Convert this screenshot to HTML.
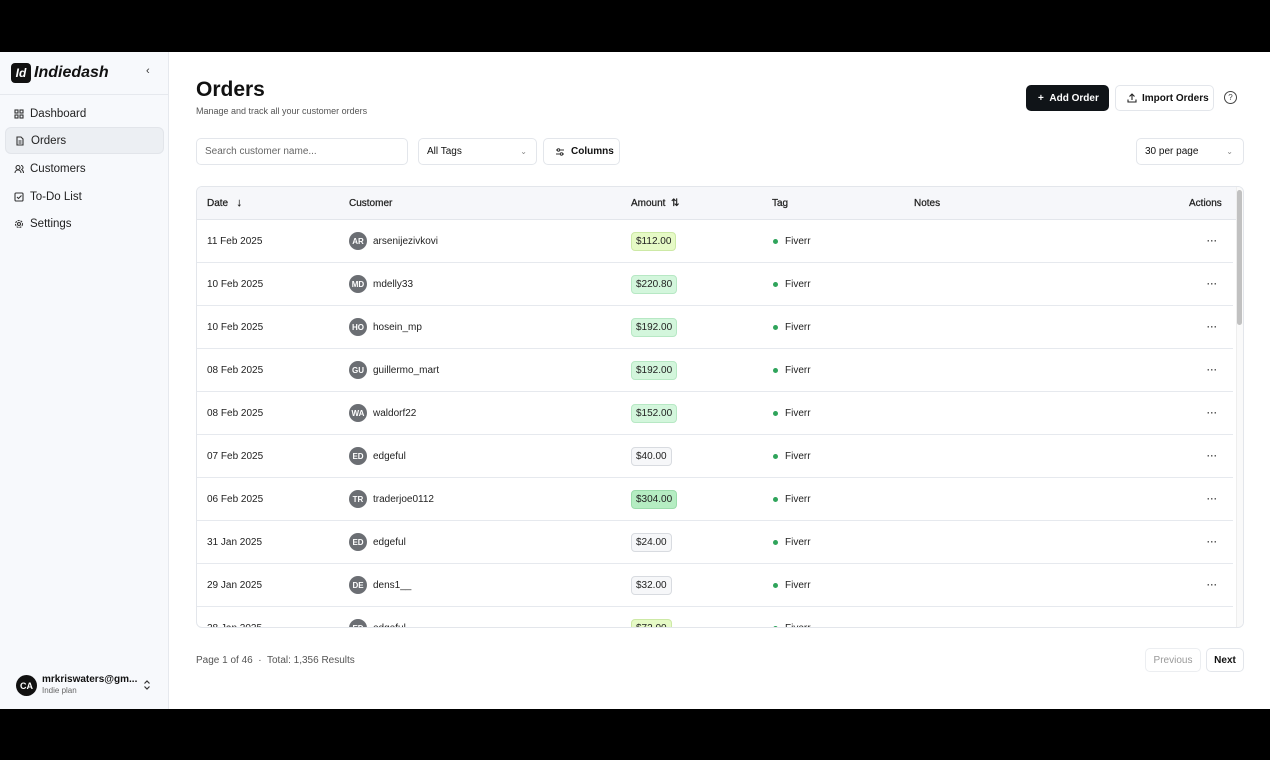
<!DOCTYPE html>
<html><head><meta charset="utf-8"><style>
*{box-sizing:border-box;margin:0;padding:0}
body{width:1270px;height:760px;background:#000;font-family:"Liberation Sans",sans-serif;color:#111;position:relative;overflow:hidden;font-size:10px}
.a{position:absolute}
#app{position:absolute;left:0;top:52px;width:1270px;height:657px;background:#fff}
#side{position:absolute;left:0;top:0;width:169px;height:657px;background:#f7f9fc;border-right:1px solid #e6e9ee}
.nav{position:absolute;left:5px;width:159px;height:27px;display:flex;align-items:center;padding-left:9px;font-size:11.5px;color:#222;gap:6px}
.nav.act{background:#eceff3;border:1px solid #e2e5ea;border-radius:6px}
.btn{position:absolute;border:1px solid #e3e6eb;border-radius:5px;background:#fff;display:flex;align-items:center;font-size:10px}
#tbl{position:absolute;left:196px;top:134px;width:1048px;height:442px;border:1px solid #e3e6eb;border-radius:6px;overflow:hidden}
.hd{position:absolute;left:0;top:0;width:1040px;height:33px;background:#f6f7fa;border-bottom:1px solid #e3e6eb}
.row{position:absolute;left:0;width:1036px;height:43px;border-bottom:1px solid #e6e9ee}
.c{position:absolute;top:0;height:100%;display:flex;align-items:center;font-size:10px;color:#222}
.hd .c{color:#222;-webkit-text-stroke:0.25px #222}
.av{width:18px;height:18px;border-radius:50%;background:#6b6e73;color:#fff;font-size:8px;font-weight:bold;display:flex;align-items:center;justify-content:center;margin-right:6px}
.bd{padding:3px 4px;border-radius:4px;border:1px solid #d8dbe0;background:#f6f7f9;font-size:10px;color:#222}
.g{background:#d3f6dc;border-color:#b7e8c4}
.y{background:#e6fac6;border-color:#cde9a6}
.s{background:#b5edc2;border-color:#9bdcab}
.dot{width:5px;height:5px;border-radius:50%;background:#2fa45b;margin-right:7px}
</style></head><body>
<div id="app">
<div id="side">
 <div class="a" style="left:11px;top:11px;width:20px;height:20px;background:#111;border-radius:4px;color:#fff;font-weight:bold;font-style:italic;font-size:12px;display:flex;align-items:center;justify-content:center">Id</div>
 <div class="a" style="left:34px;top:12px;font-size:16px;font-weight:bold;font-style:italic">Indiedash</div>
 <div class="a" style="left:146px;top:13px;font-size:11px;color:#333">‹</div>
 <div class="a" style="left:0;top:42px;width:169px;height:1px;background:#e6e9ee"></div>
 <div class="nav" style="top:48px"><svg width="10" height="10" viewBox="0 0 10 10" fill="none" stroke="#333" stroke-width="1.1"><rect x="1" y="1" width="3" height="3"/><rect x="6" y="1" width="3" height="3"/><rect x="1" y="6" width="3" height="3"/><rect x="6" y="6" width="3" height="3"/></svg>Dashboard</div>
 <div class="nav act" style="top:75px"><svg width="10" height="10" viewBox="0 0 10 10" fill="none" stroke="#333" stroke-width="1.1"><path d="M2 1h4l2 2v6H2z M3.5 5h3M3.5 7h3"/></svg>Orders</div>
 <div class="nav" style="top:103px"><svg width="10" height="10" viewBox="0 0 10 10" fill="none" stroke="#333" stroke-width="1.1"><circle cx="4" cy="3.5" r="2"/><path d="M1 9c0-2 1.5-3 3-3s3 1 3 3M7 1.5a2 2 0 010 4M8 6c1 .5 1.5 1.5 1.5 3"/></svg>Customers</div>
 <div class="nav" style="top:131px"><svg width="10" height="10" viewBox="0 0 10 10" fill="none" stroke="#333" stroke-width="1.1"><rect x="1" y="1" width="8" height="8" rx="1"/><path d="M3 5l1.5 1.5L7.5 3.5"/></svg>To-Do List</div>
 <div class="nav" style="top:158px"><svg width="10" height="10" viewBox="0 0 10 10" fill="none" stroke="#333" stroke-width="1.1"><circle cx="5" cy="5" r="1.5"/><circle cx="5" cy="5" r="3.5" stroke-dasharray="2 1"/></svg>Settings</div>
 <div class="a" style="left:16px;top:623px;width:21px;height:21px;border-radius:50%;background:#111;color:#fff;font-size:9px;font-weight:bold;display:flex;align-items:center;justify-content:center">CA</div>
 <div class="a" style="left:42px;top:622px;font-size:10px;font-weight:bold">mrkriswaters@gm...</div>
 <div class="a" style="left:42px;top:634px;font-size:8px;color:#666">Indie plan</div>
 <svg class="a" style="left:143px;top:628px" width="8" height="10" viewBox="0 0 8 10" fill="none" stroke="#333" stroke-width="1.2"><path d="M1.5 3.5L4 1l2.5 2.5M1.5 6.5L4 9l2.5-2.5"/></svg>
</div>
<div class="a" style="left:196px;top:26px;font-size:21px;font-weight:bold">Orders</div>
<div class="a" style="left:196px;top:54px;font-size:9px;color:#555">Manage and track all your customer orders</div>
<div class="btn" style="left:1026px;top:33px;width:83px;height:26px;background:#101418;border-color:#101418;color:#fff;font-weight:bold;padding-left:11px">+&nbsp;&nbsp;Add Order</div>
<div class="btn" style="left:1115px;top:33px;width:99px;height:26px;font-weight:bold;padding-left:11px"><svg width="10" height="10" viewBox="0 0 10 10" fill="none" stroke="#222" stroke-width="1.1" style="margin-right:5px"><path d="M5 7V1M2.5 3.5L5 1l2.5 2.5M1 6.5V9h8V6.5"/></svg>Import Orders</div>
<div class="a" style="left:1224px;top:39px;width:13px;height:13px;border:1.2px solid #444;border-radius:50%;font-size:8px;text-align:center;line-height:11px;color:#444">?</div>
<div class="btn" style="left:196px;top:86px;width:212px;height:27px;padding-left:8px;color:#666">Search customer name...</div>
<div class="btn" style="left:418px;top:86px;width:119px;height:27px;padding-left:8px;justify-content:space-between;padding-right:9px"><span>All Tags</span><span style="color:#888;font-size:8px">⌄</span></div>
<div class="btn" style="left:543px;top:86px;width:77px;height:27px;padding-left:11px;font-weight:bold"><svg width="10" height="10" viewBox="0 0 10 10" fill="none" stroke="#333" stroke-width="1" style="margin-right:6px"><path d="M1 3h8M1 7h8"/><circle cx="3.5" cy="3" r="1.2" fill="#fff"/><circle cx="6.5" cy="7" r="1.2" fill="#fff"/></svg>Columns</div>
<div class="btn" style="left:1136px;top:86px;width:108px;height:27px;padding-left:8px;justify-content:space-between;padding-right:10px"><span>30 per page</span><span style="color:#888;font-size:8px">⌄</span></div>
<div id="tbl">
 <div class="hd">
  <div class="c" style="left:10px">Date&nbsp;&nbsp;&nbsp;<span style="font-size:11px">↓</span></div>
  <div class="c" style="left:152px">Customer</div>
  <div class="c" style="left:434px">Amount&nbsp;&nbsp;<span style="font-size:10px">⇅</span></div>
  <div class="c" style="left:575px">Tag</div>
  <div class="c" style="left:717px">Notes</div>
  <div class="c" style="left:992px">Actions</div>
 </div>
 <div class="a" style="left:1039px;top:0;width:8px;height:442px;background:#fafafa;border-left:1px solid #eee"></div>
 <div class="a" style="left:1040px;top:3px;width:5px;height:135px;background:#c1c1c1;border-radius:3px"></div>
 <div id="rows"></div>
</div>
<div class="a" style="left:196px;top:603px;font-size:10px;color:#555">Page 1 of 46 &nbsp;·&nbsp; Total: 1,356 Results</div>
<div class="btn" style="left:1145px;top:596px;width:56px;height:24px;justify-content:center;color:#999;border-color:#eceef1">Previous</div>
<div class="btn" style="left:1206px;top:596px;width:38px;height:24px;justify-content:center;font-weight:bold">Next</div>
</div>
<script>
var d=[["11 Feb 2025","AR","arsenijezivkovi","$112.00","y"],["10 Feb 2025","MD","mdelly33","$220.80","g"],["10 Feb 2025","HO","hosein_mp","$192.00","g"],["08 Feb 2025","GU","guillermo_mart","$192.00","g"],["08 Feb 2025","WA","waldorf22","$152.00","g"],["07 Feb 2025","ED","edgeful","$40.00",""],["06 Feb 2025","TR","traderjoe0112","$304.00","s"],["31 Jan 2025","ED","edgeful","$24.00",""],["29 Jan 2025","DE","dens1__","$32.00",""],["28 Jan 2025","ED","edgeful","$72.00","y"]];
var h="";d.forEach(function(r,i){h+='<div class="row" style="top:'+(33+i*43)+'px"><div class="c" style="left:10px">'+r[0]+'</div><div class="c" style="left:152px"><div class="av">'+r[1]+'</div>'+r[2]+'</div><div class="c" style="left:434px"><span class="bd '+r[4]+'">'+r[3]+'</span></div><div class="c" style="left:576px"><div class="dot"></div>Fiverr</div><div class="c" style="left:1010px;font-size:9px;font-weight:bold;letter-spacing:0.5px;color:#333">···</div></div>'});
document.getElementById("rows").innerHTML=h;
</script>
</body></html>
